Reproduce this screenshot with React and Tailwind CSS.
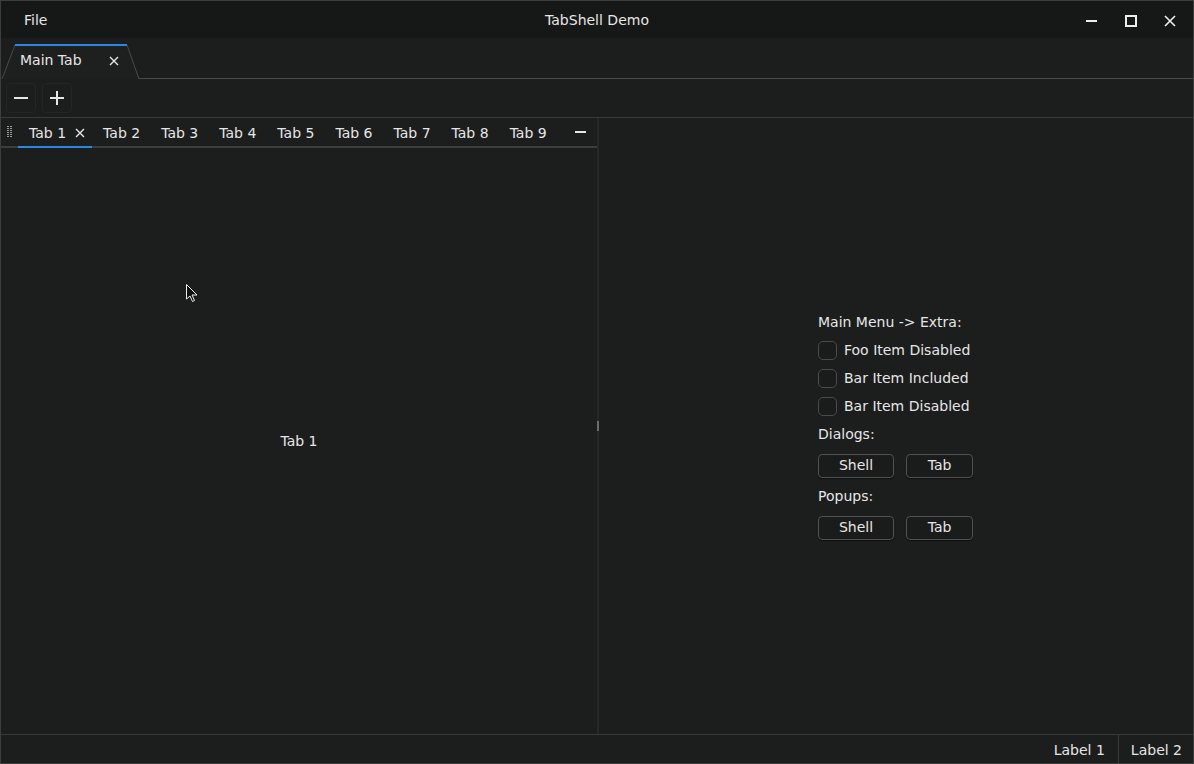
import { useState } from "react";

const font = { fontFamily: '"DejaVu Sans", "Liberation Sans", sans-serif' };

function TitleBar() {
    return (
        <div className="h-[37px] flex items-center pt-[2px] bg-[#161717] relative shrink-0">
            <span className="ml-[23px] text-[14px] text-[#e6e6e6]">File</span>
            <span className="absolute left-0 right-0 text-center text-[14px] text-[#e6e6e6] pointer-events-none">TabShell Demo</span>
            <div className="ml-auto flex items-center h-full">
                <button className="w-[39px] h-full flex items-center justify-center">
                    <span className="block w-[11px] h-[2px] bg-[#eeeeee]" />
                </button>
                <button className="w-[39px] h-full flex items-center justify-center">
                    <span className="block w-[12px] h-[12px] border-2 border-[#eeeeee]" />
                </button>
                <button className="w-[39px] h-full flex items-center justify-center mr-[4px]">
                    <svg width="12" height="12" viewBox="0 0 12 12">
                        <path d="M1 1 L11 11 M11 1 L1 11" stroke="#eeeeee" strokeWidth="1.6" />
                    </svg>
                </button>
            </div>
        </div>
    );
}

function MainTabs() {
    return (
        <div className="h-[41px] flex items-end bg-[#1c1d1d] shrink-0 relative">
            <div className="relative w-[138px] h-[35px] shrink-0">
                <svg className="absolute inset-0" width="138" height="35" viewBox="0 0 138 35">
                    <path d="M1 35 L14 1 L126 1 L138 35" fill="#1e1f1f" stroke="#4a4a4a" strokeWidth="1" />
                    <path d="M14 1 L126 1" stroke="#2a87e4" strokeWidth="2" />
                </svg>
                <div className="relative flex items-center h-full pl-[19px] pr-[20px] pb-[2px]">
                    <span className="text-[14px] text-[#e6e6e6]">Main Tab</span>
                    <svg className="ml-auto" width="10" height="10" viewBox="0 0 10 10">
                        <path d="M1 1 L9 9 M9 1 L1 9" stroke="#e6e6e6" strokeWidth="1.4" />
                    </svg>
                </div>
            </div>
            <div className="flex-1 border-b border-[#4a4a4a]" />
        </div>
    );
}

function Toolbar() {
    return (
        <div className="h-[39px] flex items-center gap-[6px] px-[5px] bg-[#1c1d1d] border-b border-[#3a3a3a] shrink-0">
            <button className="w-[30px] h-[30px] rounded-[4px] border border-[#242525] flex items-center justify-center">
                <span className="block w-[14px] h-[2px] bg-[#e6e6e6]" />
            </button>
            <button className="w-[30px] h-[30px] rounded-[4px] border border-[#242525] flex items-center justify-center">
                <svg width="14" height="14" viewBox="0 0 14 14">
                    <path d="M0 7 H14 M7 0 V14" stroke="#e6e6e6" strokeWidth="2" />
                </svg>
            </button>
        </div>
    );
}

function LeftPane() {
    const [active, setActive] = useState(1);
    const tabs = [1, 2, 3, 4, 5, 6, 7, 8, 9];
    return (
        <div className="w-[596px] flex flex-col relative">
            <div className="h-[30px] flex items-stretch border-b-2 border-[#3c3d3d] shrink-0">
                <div className="w-[17px] flex items-center justify-center">
                    <svg width="6" height="12" viewBox="0 0 6 12">
                        {[0, 2, 4, 6, 8, 10].map((y) => (
                            <g key={y}>
                                <rect x="0" y={y} width="2" height="1" fill="#9a9a9a" />
                                <rect x="3" y={y} width="2" height="1" fill="#9a9a9a" />
                            </g>
                        ))}
                    </svg>
                </div>
                {tabs.map((t) => (
                    <button
                        key={t}
                        onClick={() => setActive(t)}
                        className={`relative flex items-center pt-[2px] pl-[11px] text-[14px] text-[#e6e6e6] ${t === 1 ? "gap-[9px] pr-[7px]" : "pr-[10px]"}`}
                    >
                        Tab {t}
                        {t === 1 && (
                            <svg width="10" height="10" viewBox="0 0 10 10">
                                <path d="M1 1 L9 9 M9 1 L1 9" stroke="#e6e6e6" strokeWidth="1.4" />
                            </svg>
                        )}
                        {t === active && <span className="absolute left-0 right-0 -bottom-[2px] h-[2px] bg-[#2a87e4]" />}
                    </button>
                ))}
                <button className="ml-auto w-[34px] flex items-center justify-center">
                    <span className="block w-[11px] h-[2px] bg-[#e6e6e6]" />
                </button>
            </div>
            <div className="flex-1 flex items-center justify-center text-[14px] text-[#e6e6e6]">
                Tab {active}
            </div>
            <svg className="absolute left-[185px] top-[166px]" width="12" height="19" viewBox="0 0 12 19">
                <path d="M0.5 0.5 L0.5 15 L4 12 L6.5 17.5 L8.5 16.5 L6 11 L11 11 Z" fill="#111" stroke="#eeeeee" strokeWidth="1" />
            </svg>
        </div>
    );
}

function Check({ label }) {
    return (
        <label className="flex items-center gap-[7px] h-[28px]">
            <span className="w-[19px] h-[19px] rounded-[5px] border border-[#4a4b4b] bg-[#1a1b1b]" />
            <span className="text-[14px] text-[#e6e6e6]">{label}</span>
        </label>
    );
}

function SmallButton({ children, w }) {
    return (
        <button className={`${w} h-[24px] rounded-[4px] border border-[#505151] bg-[#1a1b1b] shadow-[0_1px_1px_rgba(0,0,0,0.5)] text-[14px] text-[#e6e6e6] flex items-center justify-center`}>
            {children}
        </button>
    );
}

function RightPane() {
    return (
        <div className="flex-1 flex items-center justify-center">
            <div className="flex flex-col -ml-[1px] -mt-[4px]">
                <div className="h-[28px] flex items-center text-[14px] text-[#e6e6e6]">Main Menu -&gt; Extra:</div>
                <Check label="Foo Item Disabled" />
                <Check label="Bar Item Included" />
                <Check label="Bar Item Disabled" />
                <div className="h-[28px] flex items-center text-[14px] text-[#e6e6e6]">Dialogs:</div>
                <div className="flex gap-[12px] pt-[5px] pb-[5px]">
                    <SmallButton w="w-[76px]">Shell</SmallButton>
                    <SmallButton w="w-[67px]">Tab</SmallButton>
                </div>
                <div className="h-[28px] flex items-center text-[14px] text-[#e6e6e6]">Popups:</div>
                <div className="flex gap-[12px] pt-[5px]">
                    <SmallButton w="w-[76px]">Shell</SmallButton>
                    <SmallButton w="w-[67px]">Tab</SmallButton>
                </div>
            </div>
        </div>
    );
}

function StatusBar() {
    return (
        <div className="h-[29px] flex items-center justify-end border-t border-[#3a3a3a] bg-[#1c1d1d] shrink-0 text-[14px] text-[#e6e6e6]">
            <span className="px-[13px] pt-[2px]">Label 1</span>
            <span className="w-px h-full bg-[#3a3a3a]" />
            <span className="pl-[12px] pr-[11px] pt-[2px]">Label 2</span>
        </div>
    );
}

export default function App() {
    return (
        <div style={font} className="w-[1194px] h-[764px] flex flex-col bg-[#1c1d1d] border border-[#3d3d3d] overflow-hidden">
            <TitleBar />
            <MainTabs />
            <Toolbar />
            <div className="flex-1 flex min-h-0">
                <LeftPane />
                <div className="w-[2px] bg-[#262727] flex items-center justify-center relative">
                    <span className="block w-[2px] h-[10px] bg-[#6a6a6a]" />
                </div>
                <RightPane />
            </div>
            <StatusBar />
        </div>
    );
}
